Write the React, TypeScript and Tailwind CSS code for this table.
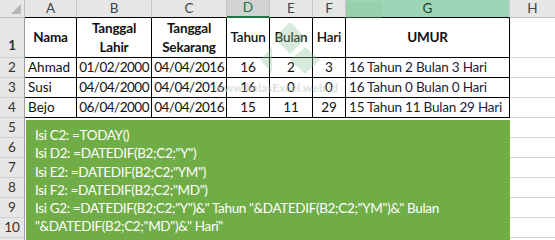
import React from 'react'

type Row = { nama: string; lahir: string; now: string; th: string; bl: string; hr: string; umur: string }

const rows: Row[] = [
  { nama: 'Ahmad', lahir: '01/02/2000', now: '04/04/2016', th: '16', bl: '2', hr: '3', umur: '16 Tahun 2 Bulan 3 Hari' },
  { nama: 'Susi', lahir: '04/04/2000', now: '04/04/2016', th: '16', bl: '0', hr: '0', umur: '16 Tahun 0 Bulan 0 Hari' },
  { nama: 'Bejo', lahir: '06/04/2000', now: '04/04/2016', th: '15', bl: '11', hr: '29', umur: '15 Tahun 11 Bulan 29 Hari' },
]

const formulas = [
  'Isi C2: =TODAY()',
  'Isi D2: =DATEDIF(B2;C2;"Y")',
  'Isi E2: =DATEDIF(B2;C2;"YM")',
  'Isi F2: =DATEDIF(B2;C2;"MD")',
  'Isi G2: =DATEDIF(B2;C2;"Y")&" Tahun "&DATEDIF(B2;C2;"YM")&" Bulan',
  '"&DATEDIF(B2;C2;"MD")&" Hari"',
]

const RowNum = ({ n, h, bottom }: { n: string; h: string; bottom?: boolean }) => (
  <div
    className={`flex w-[25px] shrink-0 justify-center border-r border-b border-r-[#9b9b9b] border-b-[#d0d0d0] bg-[#e6e6e6] text-[13.5px] text-[#333] ${h} ${bottom ? 'items-end pb-[2px]' : 'items-center'}`}
  >
    {n}
  </div>
)

const Blank = () => <div className="h-[20px] w-[45px] shrink-0 border-b border-[#d4d4d4]" />

export default function App() {
  return (
    <div className="relative h-[240px] w-[555px] overflow-hidden bg-white font-[family-name:Lato,sans-serif] leading-none text-[#111]">
      {/* column headers */}
      <div className="flex h-[18px] text-[13.5px] text-[#444]">
        <div className="relative w-[25px] shrink-0 border-r border-b border-[#bdbdbd] bg-[#e6e6e6]">
          <div className="absolute right-[3px] bottom-[3px] h-0 w-0 border-t-[10px] border-r-[10px] border-t-transparent border-r-[#b7b7b7]" />
        </div>
        <div className="flex w-[52px] shrink-0 items-center justify-center border-r border-b border-r-[#c6c6c6] border-b-black bg-[#e6e6e6]">A</div>
        <div className="flex w-[75px] shrink-0 items-center justify-center border-r border-b border-r-[#c6c6c6] border-b-black bg-[#e6e6e6]">B</div>
        <div className="flex w-[75px] shrink-0 items-center justify-center border-r border-b border-r-[#c6c6c6] border-b-black bg-[#e6e6e6]">C</div>
        <div className="flex w-[43px] shrink-0 items-center justify-center border-r border-b-2 border-r-[#c6c6c6] border-b-[#217346] bg-[#d2d2d2] text-[#217346]">D</div>
        <div className="flex w-[43px] shrink-0 items-center justify-center border-r border-b border-r-[#c6c6c6] border-b-black bg-[#e6e6e6]">E</div>
        <div className="flex w-[33px] shrink-0 items-center justify-center border-r border-b border-r-[#c6c6c6] border-b-black bg-[#e6e6e6]">F</div>
        <div className="flex w-[164px] shrink-0 items-center justify-center border-r border-b border-r-[#c6c6c6] border-b-black bg-[#9fd5b7] text-[#1e3d2b]">G</div>
        <div className="flex w-[45px] shrink-0 items-center justify-center border-b border-[#bdbdbd] bg-[#e6e6e6]">H</div>
      </div>

      {/* row 1 */}
      <div className="flex h-[40px] text-[13.5px] font-bold leading-[19px] tracking-[-0.2px]">
        <RowNum n="1" h="h-[40px]" bottom />
        <div className="flex w-[52px] shrink-0 items-center justify-center border-r border-b border-black">Nama</div>
        <div className="flex w-[75px] shrink-0 items-center justify-center border-r border-b border-black text-center">Tanggal<br />Lahir</div>
        <div className="flex w-[75px] shrink-0 items-center justify-center border-r border-b border-black text-center">Tanggal<br />Sekarang</div>
        <div className="flex w-[43px] shrink-0 items-center justify-center border-r border-b border-black font-semibold">Tahun</div>
        <div className="flex w-[43px] shrink-0 items-center justify-center border-r border-b border-black font-semibold">Bulan</div>
        <div className="flex w-[33px] shrink-0 items-center justify-center border-r border-b border-black font-semibold">Hari</div>
        <div className="flex w-[164px] shrink-0 items-center justify-center border-r border-b border-black">UMUR</div>
        <div className="h-[40px] w-[45px] shrink-0 border-b border-[#d4d4d4]" />
      </div>

      {/* data rows */}
      {rows.map((r, i) => (
        <div key={r.nama} className="flex h-[20px] whitespace-nowrap text-[13.5px] leading-[19px]">
          <RowNum n={String(i + 2)} h="h-[20px]" />
          <div className="flex w-[52px] shrink-0 items-center border-r border-b border-black pl-[3px]">{r.nama}</div>
          <div className="flex w-[75px] shrink-0 items-center justify-end border-r border-b border-black pr-[2px] tracking-[-0.5px]">{r.lahir}</div>
          <div className="flex w-[75px] shrink-0 items-center justify-end border-r border-b border-black pr-[2px] tracking-[-0.5px]">{r.now}</div>
          <div className="flex w-[43px] shrink-0 items-center justify-center border-r border-b border-black">{r.th}</div>
          <div className="flex w-[43px] shrink-0 items-center justify-center border-r border-b border-black">{r.bl}</div>
          <div className="flex w-[33px] shrink-0 items-center justify-center border-r border-b border-black">{r.hr}</div>
          <div className="flex w-[164px] shrink-0 items-center border-r border-b border-black pl-[3px] tracking-[-0.2px] text-[#1c1c3a]">{r.umur}</div>
          <Blank />
        </div>
      ))}

      {/* rows 5-10 with the green note */}
      <div className="flex">
        <div className="flex flex-col">
          {['5', '6', '7', '8', '9', '10', ''].map((n) => (
            <RowNum key={n} n={n} h="h-[20px]" />
          ))}
        </div>
        <div className="ml-px mt-[2px] h-[130px] w-[484px] shrink-0 bg-[#70ad47] pl-[9px] pt-[6px] text-[13.5px] leading-[18.3px] tracking-[-0.35px] text-white">
          {formulas.map((f) => (
            <div key={f} className="whitespace-pre">{f}</div>
          ))}
        </div>
        <div className="flex flex-col">
          {[0, 1, 2, 3, 4, 5].map((k) => (
            <Blank key={k} />
          ))}
        </div>
      </div>

      {/* watermark */}
      <div className="pointer-events-none absolute left-0 top-0 h-[240px] w-[555px]">
        <svg className="absolute left-[250px] top-[2px]" width="140" height="80" viewBox="0 0 140 80">
          <g fill="#8cc79a" opacity="0.35">
            <polygon points="10,58 22,45 22,71" />
            <polygon points="40,20 56,36 40,52 24,36" />
            <polygon points="55,45 70,58 55,72 40,58" />
            <polygon points="96,0 132,0 132,16 96,16" />
          </g>
        </svg>
        <div className="absolute left-[214px] top-[82px] text-[12px] font-bold text-[#c4d2c4] opacity-60">www.kelasExcel.web.id</div>
      </div>
    </div>
  )
}
